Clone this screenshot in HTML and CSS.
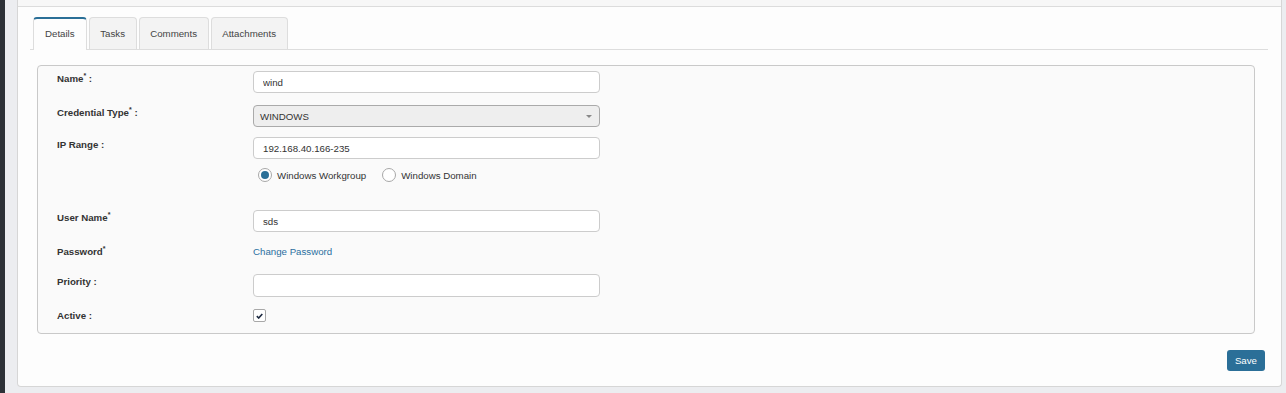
FILE: index.html
```html
<!DOCTYPE html>
<html lang="en">
<head>
    <meta charset="UTF-8">
    <meta name="viewport" content="width=device-width, initial-scale=1.0">
    <title>Credential Details</title>
    <link rel="stylesheet" href="styles.css">
</head>
<body>

    <div class="sidebar"></div>

    <div class="main">
        <div class="card">
            <div class="card-head"></div>

            <div class="card-body">
                <ul class="tabs">
                    <li class="tab active">Details</li>
                    <li class="tab">Tasks</li>
                    <li class="tab">Comments</li>
                    <li class="tab">Attachments</li>
                </ul>

                <div class="panel">
                    <div class="form-row row-name">
                        <label class="field-label">Name<sup>*</sup> :</label>
                        <div class="field">
                            <input type="text" class="text-input" value="wind">
                        </div>
                    </div>

                    <div class="form-row row-type">
                        <label class="field-label">Credential Type<sup>*</sup> :</label>
                        <div class="field">
                            <div class="select-box">
                                <span>WINDOWS</span>
                                <span class="caret"></span>
                            </div>
                        </div>
                    </div>

                    <div class="form-row row-ip">
                        <label class="field-label">IP Range :</label>
                        <div class="field">
                            <input type="text" class="text-input" value="192.168.40.166-235">
                            <div class="radio-group">
                                <span class="radio checked"></span>
                                <span class="radio-label">Windows Workgroup</span>
                                <span class="radio"></span>
                                <span class="radio-label">Windows Domain</span>
                            </div>
                        </div>
                    </div>

                    <div class="form-row row-user">
                        <label class="field-label">User Name<sup>*</sup></label>
                        <div class="field">
                            <input type="text" class="text-input" value="sds">
                        </div>
                    </div>

                    <div class="form-row row-pass">
                        <label class="field-label">Password<sup>*</sup></label>
                        <div class="field">
                            <a href="#" class="link">Change Password</a>
                        </div>
                    </div>

                    <div class="form-row row-priority">
                        <label class="field-label">Priority :</label>
                        <div class="field">
                            <input type="text" class="text-input tall" value="">
                        </div>
                    </div>

                    <div class="form-row row-active">
                        <label class="field-label">Active :</label>
                        <div class="field">
                            <span class="checkbox">
                                <svg width="7" height="6" viewBox="0 0 7 6">
                                    <path d="M0.8 3.2 L2.7 5 L6.3 1" fill="none" stroke="#1c2940" stroke-width="1.6"/>
                                </svg>
                            </span>
                        </div>
                    </div>
                </div>

                <div class="actions">
                    <button type="button" class="save-btn">Save</button>
                </div>
            </div>
        </div>
    </div>

</body>
</html>
```

FILE: styles.css
```css
body {
    margin: 0;
    height: 393px;
    display: flex;
    background-color: #ecedf0;
    font-family: "Liberation Sans", Arial, sans-serif;
    font-size: 9.7px;
    color: #333;
    overflow: hidden;
}
.sidebar {
    width: 5px;
    background-color: #2d3137;
}
.main {
    flex: 1;
    padding: 0 4px 0 12px;
}
.card {
    background-color: #fdfdfd;
    border: 1px solid #d6d6d6;
    border-top: none;
    border-radius: 0 0 4px 4px;
}
.card-head {
    height: 6px;
    background-color: #f7f7f7;
    border-bottom: 1px solid #dcdcdc;
}
.card-body {
    padding: 10px 13px 15px 12px;
}

/* tabs */
.tabs {
    list-style: none;
    margin: 0;
    padding: 0 0 0 3px;
    display: flex;
    border-bottom: 1px solid #dddddd;
}
.tab {
    height: 31px;
    line-height: 31px;
    padding: 0 10.6px;
    margin-right: 2px;
    margin-bottom: -1px;
    background-color: #f3f3f3;
    border: 1px solid #dddddd;
    border-bottom: none;
    border-radius: 4px 4px 0 0;
    color: #444;
}
.tab.active {
    padding: 0 11px;
    background-color: #fdfdfd;
    border-top: 2px solid #2a6f97;
    line-height: 30px;
}

/* form panel */
.panel {
    margin: 15px 13px 0 7px;
    padding: 5px 20px 11px 19px;
    border: 1px solid #c9c9c9;
    border-radius: 4px;
    background-color: #fafafa;
}
.form-row {
    display: flex;
    align-items: flex-start;
}
.field-label {
    width: 196px;
    flex-shrink: 0;
    padding-top: 2px;
    line-height: 12px;
    font-weight: bold;
    color: #333;
}
.field-label sup {
    font-size: 7px;
    line-height: 0;
    vertical-align: 4px;
}
.field {
    width: 347px;
}
.row-name { margin-bottom: 12px; }
.row-type { margin-bottom: 10px; }
.row-ip { margin-bottom: 28px; }
.row-user { margin-bottom: 12px; }
.row-pass { height: 18px; margin-bottom: 12px; }
.row-priority { margin-bottom: 12px; }
.row-active .field-label { padding-top: 1px; }

.text-input {
    display: block;
    box-sizing: border-box;
    width: 100%;
    height: 22px;
    padding: 0 9px;
    border: 1px solid #cccccc;
    border-radius: 4px;
    background-color: #fff;
    font-family: inherit;
    font-size: 9.7px;
    color: #333;
}
.text-input.tall {
    height: 23px;
}
.select-box {
    box-sizing: border-box;
    height: 22px;
    padding: 0 6px;
    border: 1px solid #aaaaaa;
    border-radius: 4px;
    background-color: #eeeeee;
    display: flex;
    align-items: center;
    justify-content: space-between;
    color: #333;
}
.caret {
    width: 0;
    height: 0;
    border-left: 3px solid transparent;
    border-right: 3px solid transparent;
    border-top: 3px solid #888;
    margin-right: 1px;
}

.radio-group {
    display: flex;
    align-items: center;
    margin-top: 9px;
    padding-left: 5px;
    height: 14px;
}
.radio {
    box-sizing: border-box;
    width: 14px;
    height: 14px;
    border: 1px solid #a8a8a8;
    border-radius: 50%;
    background-color: #fff;
    position: relative;
}
.radio.checked::after {
    content: "";
    position: absolute;
    left: 2px;
    top: 2px;
    width: 8px;
    height: 8px;
    border-radius: 50%;
    background-color: #2a6f97;
}
.radio-label {
    margin: 0 16px 0 5px;
    color: #333;
}

.link {
    display: block;
    padding-top: 2px;
    line-height: 12px;
    color: #2a6fa0;
    text-decoration: none;
}
.checkbox {
    box-sizing: border-box;
    display: flex;
    align-items: center;
    justify-content: center;
    width: 13px;
    height: 13px;
    border: 1px solid #a8a8a8;
    border-radius: 2px;
    background-color: #fff;
}

.actions {
    display: flex;
    justify-content: flex-end;
    margin: 16px 3px 0 0;
}
.save-btn {
    height: 21px;
    padding: 0 8px;
    border: none;
    border-radius: 3px;
    background-color: #2b6f98;
    color: #fff;
    font-family: inherit;
    font-size: 9.7px;
    cursor: pointer;
}
```
